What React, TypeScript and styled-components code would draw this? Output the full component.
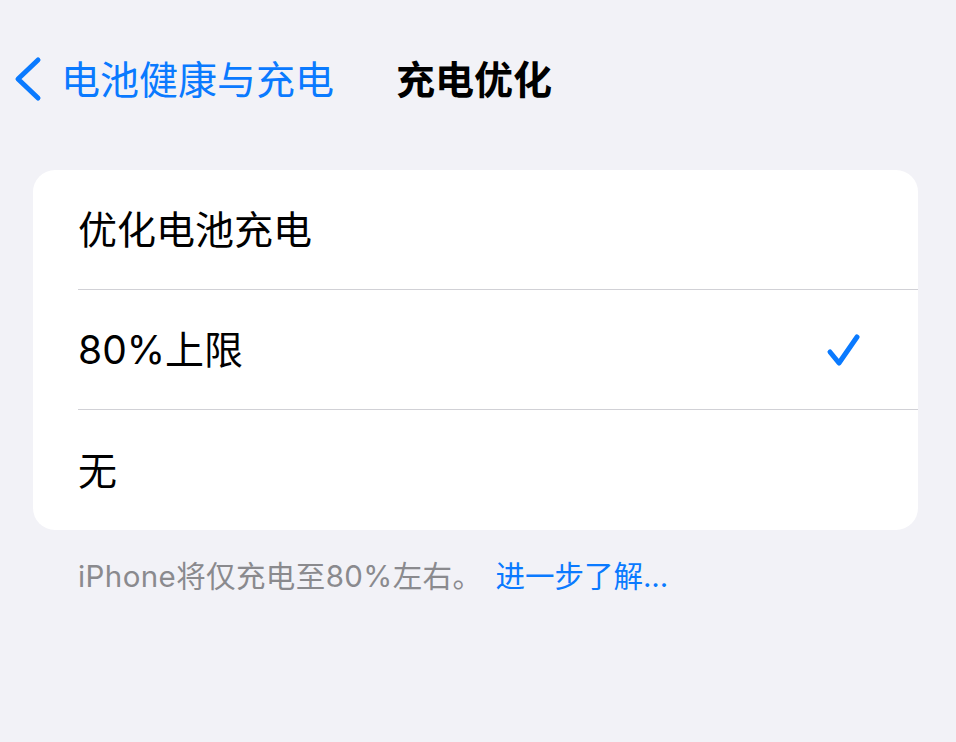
import React from 'react';
import styled, { createGlobalStyle } from 'styled-components';

const GlobalStyle = createGlobalStyle`
  html, body {
    margin: 0;
    padding: 0;
    background: #f2f2f7;
  }
  body {
    font-family: Inter, "Noto Sans CJK SC", sans-serif;
    -webkit-font-smoothing: antialiased;
  }
`;

const BLUE = '#0a7aff';

const options = [
  { label: '优化电池充电', selected: false },
  { label: '80%上限', selected: true },
  { label: '无', selected: false },
];

export default function App() {
  return (
    <>
      <GlobalStyle />
      <Page>
        <NavBar>
          <BackButton>
            <svg width="30" height="46" viewBox="0 0 30 46" fill="none">
              <path
                d="M25 4 L5 23 L25 42"
                stroke={BLUE}
                strokeWidth="5"
                strokeLinecap="round"
                strokeLinejoin="round"
              />
            </svg>
            <BackLabel>电池健康与充电</BackLabel>
          </BackButton>
          <Title>充电优化</Title>
        </NavBar>

        <Card>
          {options.map((o, i) => (
            <Row key={o.label} $last={i === options.length - 1}>
              <RowLabel>{o.label}</RowLabel>
              {o.selected && (
                <Check>
                  <svg width="36" height="36" viewBox="0 0 36 36" fill="none">
                    <path
                      d="M4 19 L13 30 L31 4"
                      stroke={BLUE}
                      strokeWidth="5"
                      strokeLinecap="round"
                      strokeLinejoin="round"
                    />
                  </svg>
                </Check>
              )}
            </Row>
          ))}
        </Card>

        <Footer>
          <FooterNote>iPhone将仅充电至80%左右。</FooterNote>
          <FooterLink>进一步了解...</FooterLink>
        </Footer>
      </Page>
    </>
  );
}

const Page = styled.div`
  width: 956px;
  height: 742px;
  overflow: hidden;
`;

const NavBar = styled.div`
  height: 158px;
  display: flex;
  align-items: center;
  gap: 62px;
  padding-left: 13px;
  margin-bottom: 12px;
`;

const BackButton = styled.div`
  display: flex;
  align-items: center;
  gap: 18px;
`;

const BackLabel = styled.span`
  font-size: 39px;
  color: ${BLUE};
  line-height: 1;
`;

const Title = styled.span`
  font-size: 39px;
  font-weight: 700;
  color: #000;
  line-height: 1;
`;

const Card = styled.div`
  margin: 0 38px 0 33px;
  background: #fff;
  border-radius: 22px;
  overflow: hidden;
`;

const Row = styled.div<{ $last: boolean }>`
  height: 120px;
  margin-left: 45px;
  padding-right: 56px;
  display: flex;
  align-items: center;
  justify-content: space-between;
  box-sizing: border-box;
  border-bottom: ${({ $last }) => ($last ? 'none' : '1.5px solid #d1d1d6')};
`;

const RowLabel = styled.span`
  font-size: 39px;
  color: #000;
  line-height: 1;
`;

const Check = styled.span`
  display: flex;
  margin-top: 2px;
`;

const Footer = styled.div`
  margin-top: 28px;
  padding-left: 78px;
  font-size: 29.5px;
  line-height: 36px;
  white-space: nowrap;
`;

const FooterNote = styled.span`
  color: #8a8a8e;
  letter-spacing: 0.4px;
`;

const FooterLink = styled.span`
  color: ${BLUE};
  margin-left: 13px;
`;
